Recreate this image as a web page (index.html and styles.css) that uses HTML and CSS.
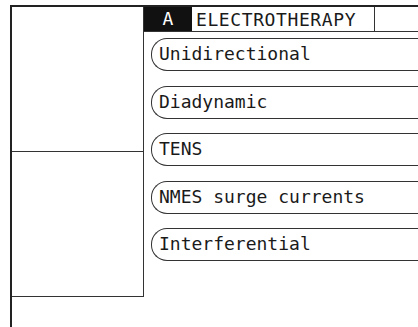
FILE: index.html
```html
<!DOCTYPE html>
<html lang="en">
<head>
  <meta charset="UTF-8">
  <meta name="viewport" content="width=device-width, initial-scale=1.0">
  <title>Electrotherapy</title>
  <link rel="stylesheet" href="styles.css">
</head>
<body>
  <div class="screen">
    <div class="side">
      <div class="side-top"></div>
      <div class="side-bottom"></div>
    </div>

    <div class="main">
      <div class="header">
        <div class="tab">A</div>
        <div class="title">ELECTROTHERAPY</div>
        <div class="spare"></div>
      </div>

      <div class="menu">
        <div class="item">Unidirectional</div>
        <div class="item">Diadynamic</div>
        <div class="item">TENS</div>
        <div class="item">NMES surge currents</div>
        <div class="item">Interferential</div>
      </div>
    </div>
  </div>
</body>
</html>
```

FILE: styles.css
```css
html, body {
  margin: 0;
  background: #fff;
}
body {
  font-family: 'DejaVu Sans Mono', 'Liberation Mono', monospace;
  color: #1a1a1a;
  height: 327px;
  padding: 5px 0 0 10px;
  box-sizing: border-box;
}
.screen {
  display: flex;
  height: 322px;
  border-top: 2px solid #222;
  border-left: 2px solid #222;
}
.side {
  width: 131px;
  height: 289px;
  display: flex;
  flex-direction: column;
  border-right: 1px solid #333;
  border-bottom: 1px solid #333;
  flex-shrink: 0;
}
.side-top {
  height: 144px;
  border-bottom: 1px solid #333;
}
.side-bottom {
  flex: 1;
}
.main {
  flex: 1;
  min-width: 0;
}
.header {
  display: flex;
  height: 24px;
  border-bottom: 1px solid #333;
}
.tab {
  width: 48px;
  background: #111;
  color: #fff;
  font-size: 18px;
  line-height: 24px;
  text-align: center;
}
.title {
  width: 183px;
  border-right: 1px solid #333;
  font-size: 18px;
  line-height: 25px;
  padding-left: 4px;
  box-sizing: border-box;
  letter-spacing: 0.6px;
}
.spare {
  flex: 1;
}
.menu {
  padding: 6px 0 0 7px;
  display: flex;
  flex-direction: column;
  gap: 14.5px;
}
.item {
  height: 33px;
  box-sizing: border-box;
  border: 1.5px solid #333;
  border-right: none;
  border-radius: 16px 0 0 16px;
  font-size: 18px;
  line-height: 29px;
  padding-left: 7px;
  white-space: nowrap;
}
```
